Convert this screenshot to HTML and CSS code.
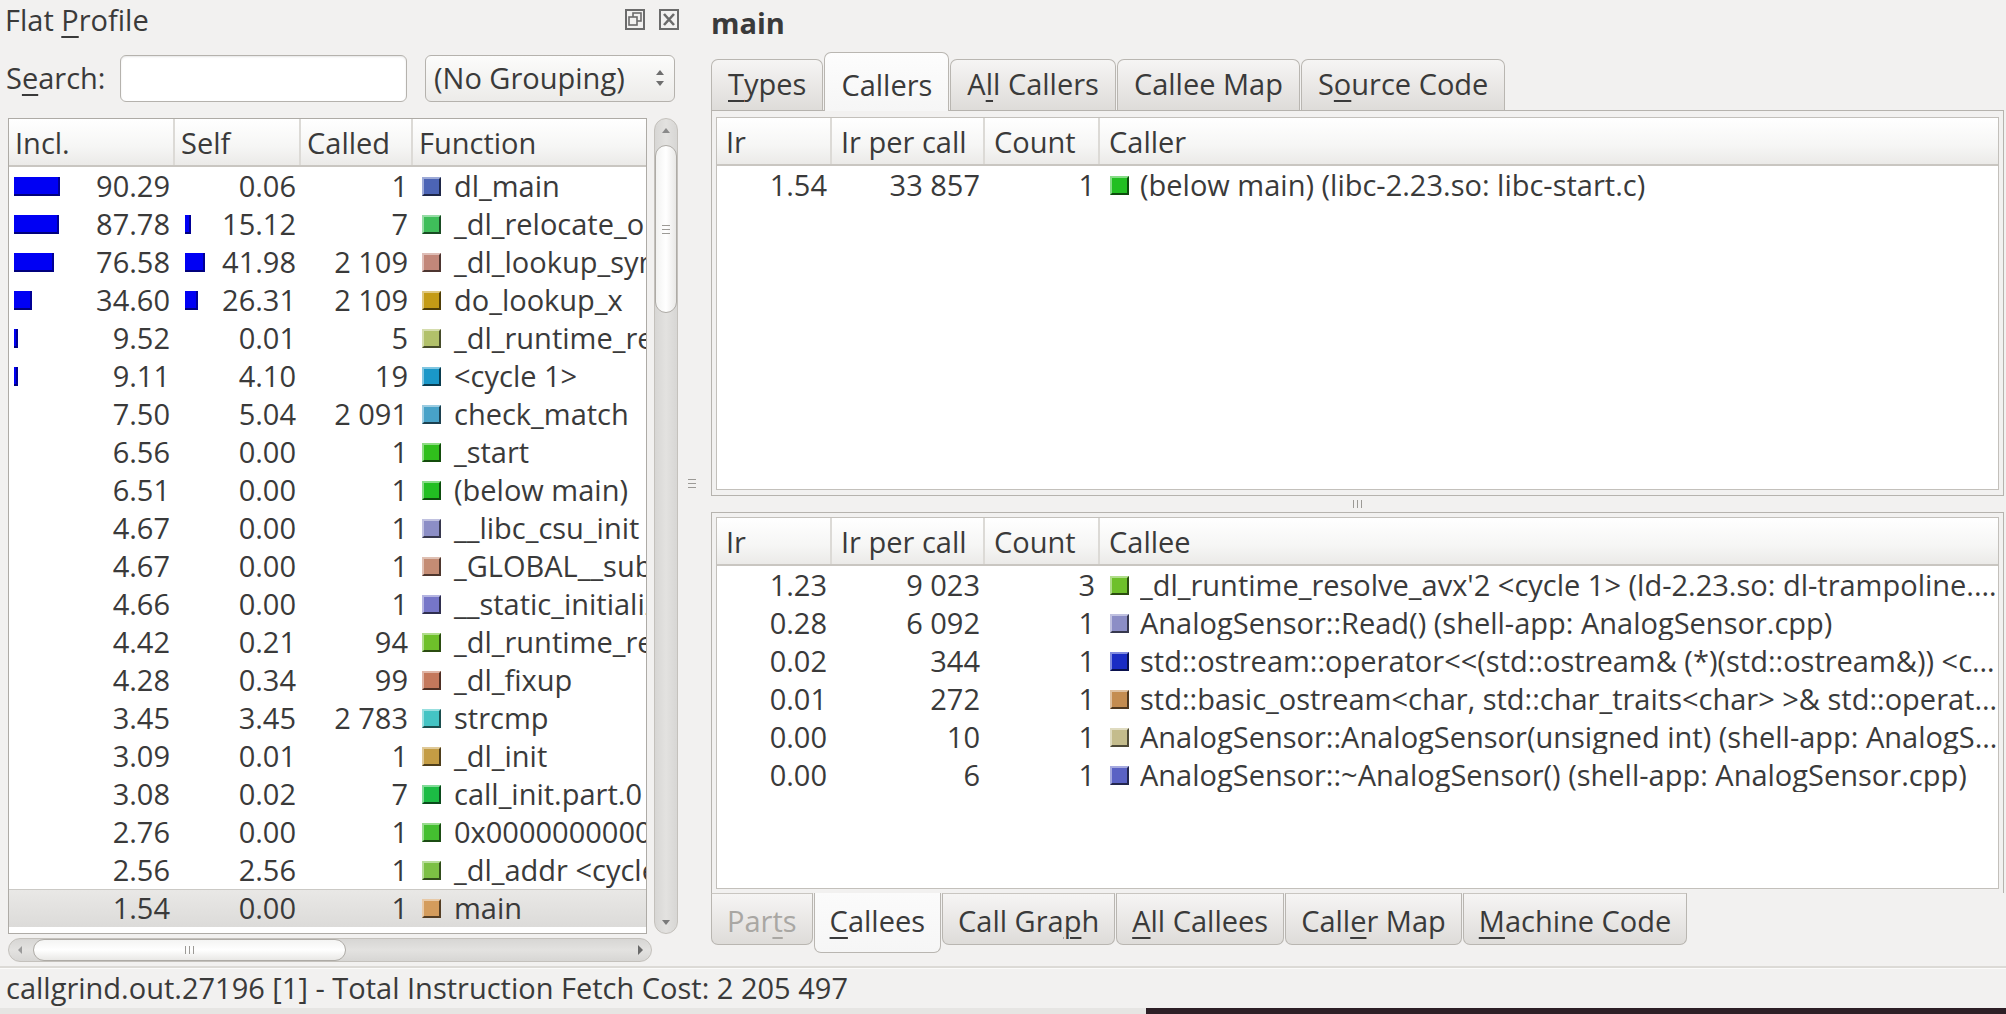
FILE: index.html
```html
<!DOCTYPE html>
<html>
<head>
<meta charset="utf-8">
<link rel="stylesheet" href="styles.css">
</head>
<body>
<div class="app">
  <div class="workspace">
    <section class="flat">
      <div class="dock-title">
        <span class="dock-name">Flat <span class="mn">P</span>rofile</span>
        <div class="dock-btns">
          <svg class="dock-icon" width="20" height="21" viewBox="0 0 20 21"><rect x="1" y="1" width="18" height="19" fill="none" stroke="#6b6b6b" stroke-width="2"/><rect x="8" y="4" width="8" height="8" fill="none" stroke="#6b6b6b" stroke-width="1.6"/><rect x="4" y="8" width="8" height="8" fill="#f2f1f0" stroke="#6b6b6b" stroke-width="1.6"/></svg>
          <svg class="dock-icon" width="20" height="21" viewBox="0 0 20 21"><rect x="1" y="1" width="18" height="19" fill="none" stroke="#6b6b6b" stroke-width="2"/><path d="M5 5 L15 16 M15 5 L5 16" stroke="#6b6b6b" stroke-width="2.6"/></svg>
        </div>
      </div>
      <div class="search-row">
        <span class="search-label">S<span class="mn">e</span>arch:</span>
        <div class="search-input"></div>
        <div class="combo"><span>(No Grouping)</span><span class="spin"><i class="tri-up"></i><i class="tri-down"></i></span></div>
      </div>
      <div class="list-area">
        <div class="tree flat-tree">
          <div class="hrow fcols">
            <div class="th">Incl.</div><div class="th">Self</div><div class="th">Called</div><div class="th last">Function</div>
          </div>
          <div class="frow fcols"><div class="num"><i class="bar" style="width:46px"></i>90.29</div><div class="num">0.06</div><div class="num">1</div><div class="fn"><i class="sw" style="background:#4c64b5"></i>dl_main</div></div>
          <div class="frow fcols"><div class="num"><i class="bar" style="width:45px"></i>87.78</div><div class="num self"><i class="bar" style="width:6px"></i>15.12</div><div class="num">7</div><div class="fn"><i class="sw" style="background:#3fbe5a"></i>_dl_relocate_object</div></div>
          <div class="frow fcols"><div class="num"><i class="bar" style="width:40px"></i>76.58</div><div class="num self"><i class="bar" style="width:20px"></i>41.98</div><div class="num">2 109</div><div class="fn"><i class="sw" style="background:#c2877a"></i>_dl_lookup_symbol_x</div></div>
          <div class="frow fcols"><div class="num"><i class="bar" style="width:18px"></i>34.60</div><div class="num self"><i class="bar" style="width:13px"></i>26.31</div><div class="num">2 109</div><div class="fn"><i class="sw" style="background:#c49b16"></i>do_lookup_x</div></div>
          <div class="frow fcols"><div class="num"><i class="bar" style="width:4px"></i>9.52</div><div class="num">0.01</div><div class="num">5</div><div class="fn"><i class="sw" style="background:#b2c16a"></i>_dl_runtime_resolve_avx</div></div>
          <div class="frow fcols"><div class="num"><i class="bar" style="width:4px"></i>9.11</div><div class="num">4.10</div><div class="num">19</div><div class="fn"><i class="sw" style="background:#1a97c8"></i>&lt;cycle 1&gt;</div></div>
          <div class="frow fcols"><div class="num">7.50</div><div class="num">5.04</div><div class="num">2 091</div><div class="fn"><i class="sw" style="background:#48a2c8"></i>check_match</div></div>
          <div class="frow fcols"><div class="num">6.56</div><div class="num">0.00</div><div class="num">1</div><div class="fn"><i class="sw" style="background:#30bf1c"></i>_start</div></div>
          <div class="frow fcols"><div class="num">6.51</div><div class="num">0.00</div><div class="num">1</div><div class="fn"><i class="sw" style="background:#22bf22"></i>(below main)</div></div>
          <div class="frow fcols"><div class="num">4.67</div><div class="num">0.00</div><div class="num">1</div><div class="fn"><i class="sw" style="background:#8c8ec6"></i>__libc_csu_init</div></div>
          <div class="frow fcols"><div class="num">4.67</div><div class="num">0.00</div><div class="num">1</div><div class="fn"><i class="sw" style="background:#c48c74"></i>_GLOBAL__sub_I_main</div></div>
          <div class="frow fcols"><div class="num">4.66</div><div class="num">0.00</div><div class="num">1</div><div class="fn"><i class="sw" style="background:#7676c8"></i>__static_initialization_and_destruction_0</div></div>
          <div class="frow fcols"><div class="num">4.42</div><div class="num">0.21</div><div class="num">94</div><div class="fn"><i class="sw" style="background:#6ec02a"></i>_dl_runtime_resolve_avx'2</div></div>
          <div class="frow fcols"><div class="num">4.28</div><div class="num">0.34</div><div class="num">99</div><div class="fn"><i class="sw" style="background:#c4785c"></i>_dl_fixup</div></div>
          <div class="frow fcols"><div class="num">3.45</div><div class="num">3.45</div><div class="num">2 783</div><div class="fn"><i class="sw" style="background:#44c4c4"></i>strcmp</div></div>
          <div class="frow fcols"><div class="num">3.09</div><div class="num">0.01</div><div class="num">1</div><div class="fn"><i class="sw" style="background:#c49c44"></i>_dl_init</div></div>
          <div class="frow fcols"><div class="num">3.08</div><div class="num">0.02</div><div class="num">7</div><div class="fn"><i class="sw" style="background:#1cbc44"></i>call_init.part.0</div></div>
          <div class="frow fcols"><div class="num">2.76</div><div class="num">0.00</div><div class="num">1</div><div class="fn"><i class="sw" style="background:#44bf30"></i>0x0000000000000c30</div></div>
          <div class="frow fcols"><div class="num">2.56</div><div class="num">2.56</div><div class="num">1</div><div class="fn"><i class="sw" style="background:#7cc044"></i>_dl_addr &lt;cycle 1&gt;</div></div>
          <div class="frow fcols selected"><div class="num">1.54</div><div class="num">0.00</div><div class="num">1</div><div class="fn"><i class="sw" style="background:#d49c5c"></i>main</div></div>
        </div>
        <div class="vscroll">
          <div class="arrow-box"><i class="tri-up small"></i></div>
          <div class="vthumb"><span class="grip-lines horiz"><i></i><i></i><i></i></span></div>
          <div class="vspace"></div>
          <div class="arrow-box"><i class="tri-down small"></i></div>
        </div>
      </div>
      <div class="hscroll">
        <div class="harrow"><i class="tri-left"></i></div>
        <div class="hthumb"><span class="grip-lines vert"><i></i><i></i><i></i></span></div>
        <div class="hspace"></div>
        <div class="harrow"><i class="tri-right"></i></div>
      </div>
    </section>

    <div class="vsplit"><span class="grip-lines horiz"><i></i><i></i><i></i></span></div>

    <section class="detail">
      <div class="detail-title">main</div>
      <div class="tabs tabs-top">
        <div class="tab"><span class="mn">T</span>ypes</div>
        <div class="tab active">Callers</div>
        <div class="tab">A<span class="mn">l</span>l Callers</div>
        <div class="tab">Callee Map</div>
        <div class="tab">S<span class="mn">o</span>urce Code</div>
      </div>
      <div class="pane pane-upper">
        <div class="tree rtree">
          <div class="hrow rcols">
            <div class="th">Ir</div><div class="th">Ir per call</div><div class="th">Count</div><div class="th last">Caller</div>
          </div>
          <div class="frow rcols"><div class="num">1.54</div><div class="num">33 857</div><div class="num">1</div><div class="fn ell"><i class="sw" style="background:#22bf22"></i><span>(below main) (libc-2.23.so: libc-start.c)</span></div></div>
        </div>
      </div>
      <div class="hsplit"><span class="grip-lines vert"><i></i><i></i><i></i></span></div>
      <div class="pane pane-lower">
        <div class="tree rtree">
          <div class="hrow rcols">
            <div class="th">Ir</div><div class="th">Ir per call</div><div class="th">Count</div><div class="th last">Callee</div>
          </div>
          <div class="frow rcols"><div class="num">1.23</div><div class="num">9 023</div><div class="num">3</div><div class="fn ell"><i class="sw" style="background:#6ec02a"></i><span>_dl_runtime_resolve_avx'2 &lt;cycle 1&gt; (ld-2.23.so: dl-trampoline.S)</span></div></div>
          <div class="frow rcols"><div class="num">0.28</div><div class="num">6 092</div><div class="num">1</div><div class="fn ell"><i class="sw" style="background:#8c8ec6"></i><span>AnalogSensor::Read() (shell-app: AnalogSensor.cpp)</span></div></div>
          <div class="frow rcols"><div class="num">0.02</div><div class="num">344</div><div class="num">1</div><div class="fn ell"><i class="sw" style="background:#1a2cc4"></i><span>std::ostream::operator&lt;&lt;(std::ostream&amp; (*)(std::ostream&amp;)) &lt;cycle 1&gt; (libstdc++.so.6.0.21)</span></div></div>
          <div class="frow rcols"><div class="num">0.01</div><div class="num">272</div><div class="num">1</div><div class="fn ell"><i class="sw" style="background:#c48c50"></i><span>std::basic_ostream&lt;char, std::char_traits&lt;char&gt; &gt;&amp; std::operator&lt;&lt; &lt;std::char_traits&lt;char&gt; &gt;(std::basic_ostream&lt;char&gt;&amp;, char const*)</span></div></div>
          <div class="frow rcols"><div class="num">0.00</div><div class="num">10</div><div class="num">1</div><div class="fn ell"><i class="sw" style="background:#c4bc8c"></i><span>AnalogSensor::AnalogSensor(unsigned int) (shell-app: AnalogSensor.cpp)</span></div></div>
          <div class="frow rcols"><div class="num">0.00</div><div class="num">6</div><div class="num">1</div><div class="fn ell"><i class="sw" style="background:#5a62c4"></i><span>AnalogSensor::~AnalogSensor() (shell-app: AnalogSensor.cpp)</span></div></div>
        </div>
      </div>
      <div class="tabs tabs-bottom">
        <div class="tab disabled">Par<span class="mn">t</span>s</div>
        <div class="tab active"><span class="mn">C</span>allees</div>
        <div class="tab">Call Gra<span class="mn">p</span>h</div>
        <div class="tab"><span class="mn">A</span>ll Callees</div>
        <div class="tab">Call<span class="mn">e</span>r Map</div>
        <div class="tab"><span class="mn">M</span>achine Code</div>
      </div>
    </section>
  </div>
  <footer class="status">callgrind.out.27196 [1] - Total Instruction Fetch Cost: 2 205 497</footer>
  <div class="below"><div class="below-light"></div><div class="below-dark"></div></div>
</div>
</body>
</html>
```

FILE: styles.css
```css
* { box-sizing: border-box; }
html, body { margin: 0; padding: 0; }
body {
  width: 2006px;
  height: 1014px;
  overflow: hidden;
  background: #f2f1f0;
  font-family: "Open Sans", "Noto Sans", "DejaVu Sans", sans-serif;
  font-size: 29px;
  line-height: 1.2;
  color: #3a3a3a;
}
.app { display: flex; flex-direction: column; height: 1014px; }
.workspace { display: flex; height: 966px; }

.mn {
  text-decoration: underline;
  text-decoration-thickness: 2px;
  text-underline-offset: 5px;
}

/* ---------- left dock ---------- */
.flat { width: 686px; display: flex; flex-direction: column; flex: none; }
.dock-title { height: 40px; display: flex; align-items: center; padding-left: 5px; }
.dock-name { flex: 1; }
.dock-btns { display: flex; gap: 14px; margin-right: 7px; margin-top: -2px; }
.dock-icon { display: block; }

.search-row { display: flex; align-items: center; height: 48px; margin-top: 14px; padding-left: 6px; }
.search-label { width: 114px; }
.search-input {
  width: 287px; height: 47px;
  border: 1px solid #b5b2ad; border-radius: 6px;
  background: #fff;
  box-shadow: inset 0 1px 2px rgba(0,0,0,0.1);
}
.combo {
  margin-left: 18px; width: 250px; height: 47px;
  border: 1px solid #b5b2ad; border-radius: 6px;
  background: linear-gradient(#fcfcfb, #ecebe9);
  display: flex; align-items: center; justify-content: space-between;
  padding: 0 10px 0 8px;
  white-space: nowrap;
}
.spin { display: flex; flex-direction: column; gap: 6px; align-items: center; }
.tri-up, .tri-down, .tri-left, .tri-right { display: block; width: 0; height: 0; }
.tri-up { border-left: 4px solid transparent; border-right: 4px solid transparent; border-bottom: 5px solid #6e6e6e; }
.tri-down { border-left: 4px solid transparent; border-right: 4px solid transparent; border-top: 5px solid #6e6e6e; }
.tri-up.small { border-bottom-color: #8a8a8a; }
.tri-down.small { border-top-color: #7a7a7a; }
.tri-left { border-top: 4px solid transparent; border-bottom: 4px solid transparent; border-right: 4px solid #9a9a9a; }
.tri-right { border-top: 5px solid transparent; border-bottom: 5px solid transparent; border-left: 5px solid #6a6a6a; }

.list-area { display: flex; margin-top: 16px; padding-left: 8px; height: 816px; }
.tree { background: #fff; overflow: hidden; }
.flat-tree { width: 639px; border: 1px solid #aeaba6; }

.hrow {
  display: grid; height: 48px;
  background: linear-gradient(#ffffff, #f6f6f5 60%, #ebeae8);
  border-bottom: 2px solid #c9c6c1;
}
.th {
  display: flex; align-items: center;
  padding-left: 6px; padding-top: 3px;
  border-right: 2px solid #dcdad6;
  white-space: nowrap; overflow: hidden;
}
.th.last { border-right: none; }

.fcols { grid-template-columns: 166px 126px 112px 1fr; }
.rcols { grid-template-columns: 115px 153px 115px 1fr; }

.frow { display: grid; height: 38px; align-items: center; white-space: nowrap; }
.num {
  display: flex; align-items: center; justify-content: flex-end;
  padding-right: 5px; height: 100%; position: relative;
}
.bar {
  position: absolute; left: 5px; top: 10px;
  height: 19px;
  background: #0000f4;
  border-right: 2px solid #000096;
  border-bottom: 2px solid #00007c;
}
.num.self .bar { left: 10px; }
.fn { display: flex; align-items: center; overflow: hidden; height: 100%; }
.sw {
  flex: none;
  width: 19px; height: 19px;
  margin: 0 13px 0 9px;
  border-top: 2px solid rgba(255,255,255,0.45);
  border-left: 2px solid rgba(255,255,255,0.45);
  border-bottom: 2px solid rgba(0,0,0,0.6);
  border-right: 2px solid rgba(0,0,0,0.6);
}
.fn.ell span { overflow: hidden; text-overflow: ellipsis; white-space: nowrap; min-width: 0; }
.rtree .sw { margin: 0 11px 0 10px; }
.selected {
  background: linear-gradient(#e9e8e6, #dcdbd9);
  border-top: 1px solid #cbc9c5;
}

/* scrollbars */
.vscroll {
  margin-left: 7px; width: 24px; height: 816px;
  border: 1px solid #c4c1bc; border-radius: 12px;
  background: linear-gradient(90deg, #d7d6d4, #e3e2e0 50%, #d7d6d4);
  display: flex; flex-direction: column; align-items: center;
}
.arrow-box { height: 22px; width: 100%; display: flex; align-items: center; justify-content: center; }
.vthumb {
  margin-top: 4px; width: 22px; height: 168px;
  border: 1px solid #aeaba6; border-radius: 11px;
  background: linear-gradient(90deg, #f2f2f1, #ffffff 50%, #e9e8e6);
  display: flex; align-items: center; justify-content: center;
}
.vspace { flex: 1; }

.hscroll {
  margin: 4px 0 0 8px; width: 644px; height: 24px;
  border: 1px solid #c4c1bc; border-radius: 12px;
  background: linear-gradient(#d7d6d4, #e3e2e0 50%, #d7d6d4);
  display: flex; align-items: center;
}
.harrow { width: 22px; display: flex; justify-content: center; }
.hthumb {
  margin-left: 2px; width: 313px; height: 22px;
  border: 1px solid #aeaba6; border-radius: 11px;
  background: linear-gradient(#f4f4f3, #ffffff 50%, #e9e8e6);
  display: flex; align-items: center; justify-content: center;
}
.hspace { flex: 1; }

.grip-lines { display: flex; }
.grip-lines.horiz { flex-direction: column; gap: 3px; }
.grip-lines.horiz i { display: block; width: 8px; height: 1px; background: #9c9a96; }
.grip-lines.vert { flex-direction: row; gap: 3px; }
.grip-lines.vert i { display: block; width: 1px; height: 8px; background: #9c9a96; }

.vsplit { width: 25px; flex: none; display: flex; align-items: center; padding-left: 2px; }

/* ---------- right side ---------- */
.detail { flex: 1; display: flex; flex-direction: column; margin-right: 2px; min-width: 0; }
.detail-title { height: 52px; display: flex; align-items: center; font-weight: bold; padding-left: 0; padding-bottom: 6px; }

.tabs { display: flex; }
.tab {
  display: flex; align-items: center; justify-content: center;
  padding: 0 16px;
  border: 1px solid #b9b6b1;
  background: linear-gradient(#f6f5f4, #dedcd9);
  white-space: nowrap;
  margin-right: 1px;
}
.tabs-top { height: 58px; align-items: flex-end; }
.tabs-top .tab { height: 51px; border-bottom: none; border-radius: 7px 7px 0 0; padding-bottom: 2px; }
.tabs-top .tab.active { height: 59px; margin-bottom: -1px; background: linear-gradient(#fdfdfd, #f6f6f6); position: relative; padding-top: 6px; padding-bottom: 0; }

.pane { border: 1px solid #b6b3ae; background: #f2f1f0; display: flex; }
.pane-upper { height: 386px; padding: 6px 4px 5px 4px; }
.pane-lower { height: 381px; padding: 4px 4px 4px 4px; border-bottom: none; }
.rtree { flex: 1; border: 1px solid #c3c0bb; min-width: 0; }
.rtree .th { padding-left: 9px; }

.hsplit { height: 16px; display: flex; justify-content: center; align-items: center; }

.tabs-bottom { height: 62px; align-items: flex-start; }
.tabs-bottom .tab { height: 52px; padding: 4px 15px 0 15px; border-top: 1px solid #c9c6c1; border-radius: 0 0 7px 7px; }
.tabs-bottom .tab.active { height: 60px; background: linear-gradient(#fbfbfb, #f6f6f6); border-top: none; padding-top: 2px; padding-bottom: 4px; }
.tab.disabled { color: #a9a7a3; }

/* ---------- status ---------- */
.status {
  height: 42px;
  border-top: 2px solid #dcdad6;
  box-shadow: inset 0 1px 0 #fbfbfa;
  padding-left: 6px;
  display: flex; align-items: center;
  white-space: nowrap;
}
.below { height: 6px; display: flex; }
.below-light { width: 1146px; background: #e6e5e3; }
.below-dark { flex: 1; background: #2d1f26; }
```
